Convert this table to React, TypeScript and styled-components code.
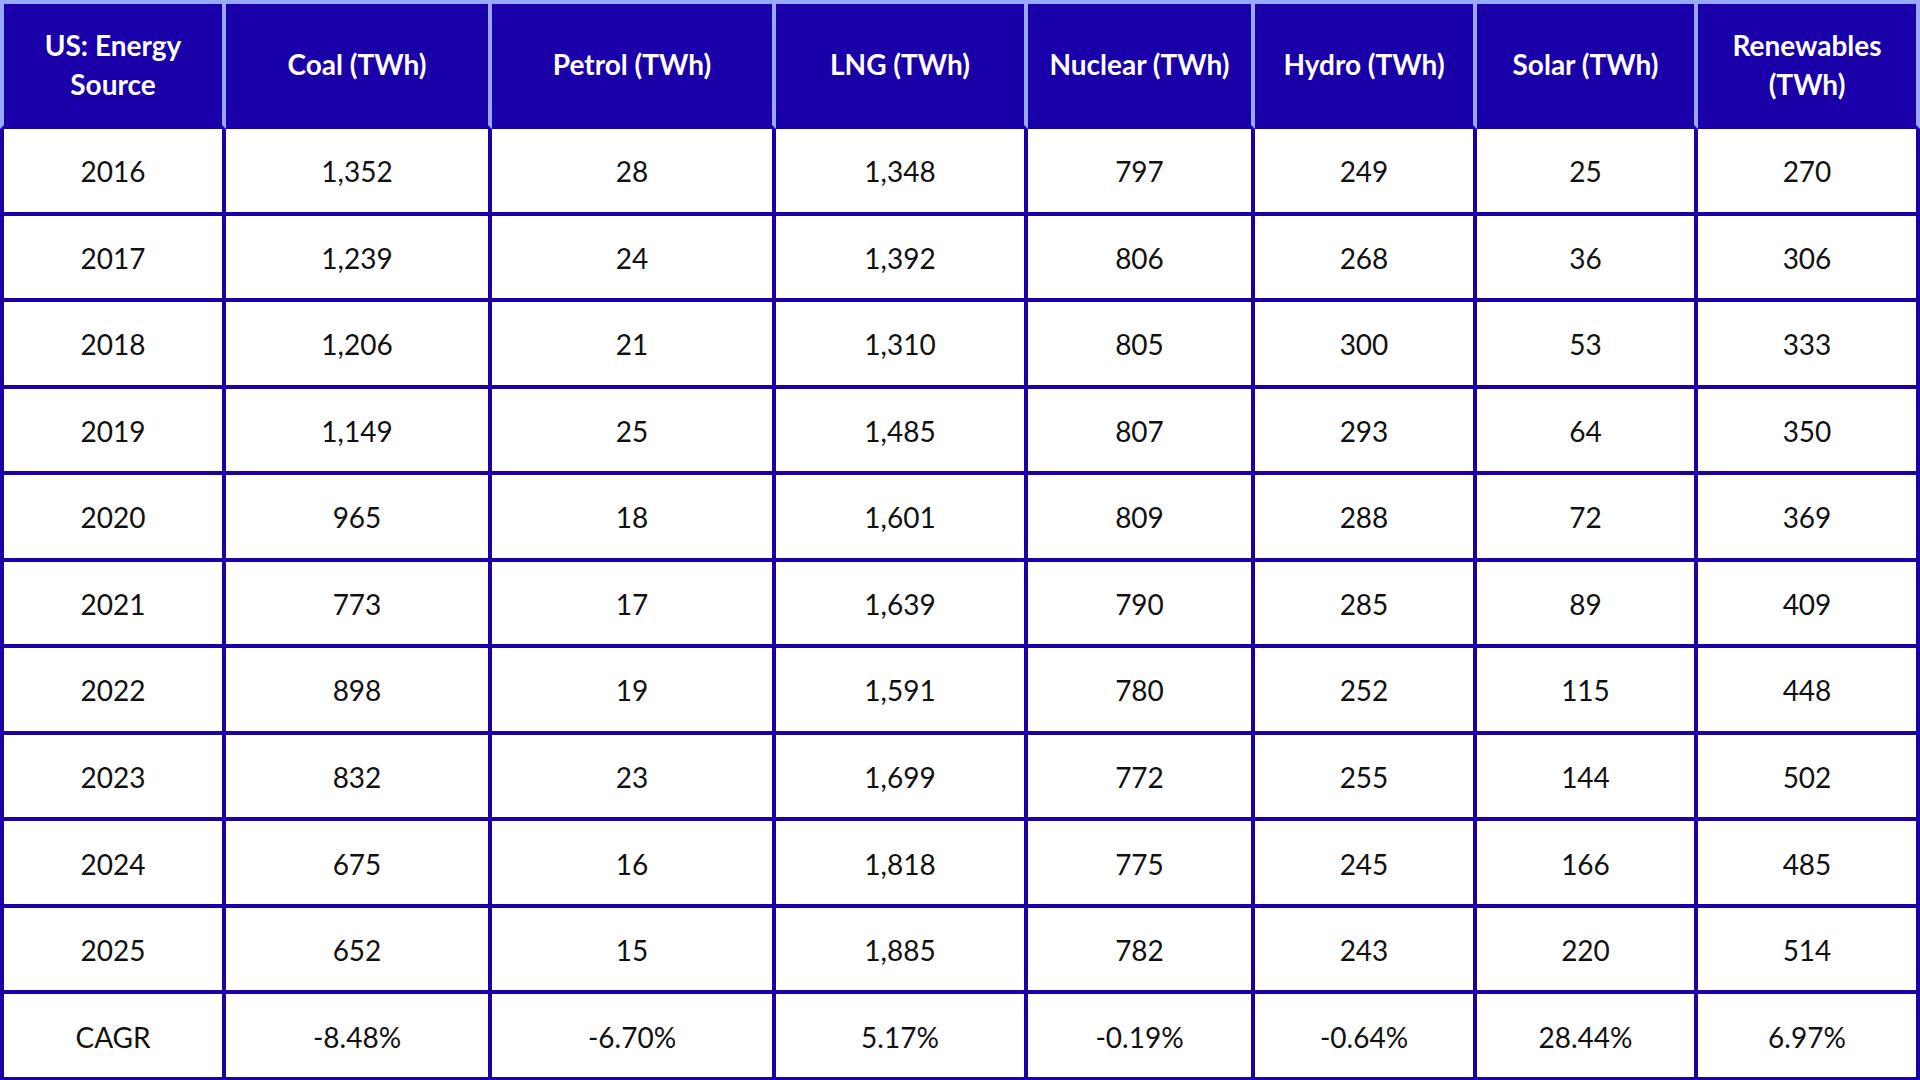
import styled, { createGlobalStyle } from 'styled-components';

const GlobalStyle = createGlobalStyle`
    html, body {
        margin: 0;
        padding: 0;
        background: #ffffff;
    }
    body {
        font-family: Lato, 'Open Sans', sans-serif;
    }
`;

const DARK = '#1900a9';
const LIGHT = '#98a8ff';

const COLUMN_WIDTHS = [226, 266, 284, 252, 227, 222, 221, 222];

const Sheet = styled.div`
    width: 1920px;
    height: 1080px;
    overflow: hidden;
`;

const Table = styled.table`
    width: 1920px;
    height: 1081px;
    table-layout: fixed;
    border-collapse: separate;
    border-spacing: 0;
`;

const HeadCell = styled.th`
    box-sizing: border-box;
    height: 129px;
    padding: 0 10px;
    background: ${DARK};
    color: #ffffff;
    font-size: 28px;
    font-weight: 700;
    line-height: 39px;
    text-align: center;
    vertical-align: middle;
    border-top: 4px solid ${LIGHT};
    border-right: 4px solid ${LIGHT};
    border-bottom: 4px solid ${DARK};

    &:first-child {
        border-left: 4px solid ${LIGHT};
    }
`;

const Cell = styled.td`
    box-sizing: border-box;
    padding: 2px 0 0;
    color: #111111;
    font-size: 28px;
    font-weight: 400;
    text-align: center;
    vertical-align: middle;
    border-right: 4px solid ${DARK};
    border-bottom: 4px solid ${DARK};

    &:first-child {
        border-left: 4px solid ${DARK};
    }
`;

const Row = styled.tr`
    height: 86.5px;
`;

const HEADERS = [
    ['US: Energy', 'Source'],
    ['Coal (TWh)'],
    ['Petrol (TWh)'],
    ['LNG (TWh)'],
    ['Nuclear (TWh)'],
    ['Hydro (TWh)'],
    ['Solar (TWh)'],
    ['Renewables', '(TWh)']
];

const ROWS = [
    ['2016', '1,352', '28', '1,348', '797', '249', '25', '270'],
    ['2017', '1,239', '24', '1,392', '806', '268', '36', '306'],
    ['2018', '1,206', '21', '1,310', '805', '300', '53', '333'],
    ['2019', '1,149', '25', '1,485', '807', '293', '64', '350'],
    ['2020', '965', '18', '1,601', '809', '288', '72', '369'],
    ['2021', '773', '17', '1,639', '790', '285', '89', '409'],
    ['2022', '898', '19', '1,591', '780', '252', '115', '448'],
    ['2023', '832', '23', '1,699', '772', '255', '144', '502'],
    ['2024', '675', '16', '1,818', '775', '245', '166', '485'],
    ['2025', '652', '15', '1,885', '782', '243', '220', '514'],
    ['CAGR', '-8.48%', '-6.70%', '5.17%', '-0.19%', '-0.64%', '28.44%', '6.97%']
];

function App() {
    return (
        <Sheet>
            <GlobalStyle />
            <Table>
                <colgroup>
                    {COLUMN_WIDTHS.map((width, index) => (
                        <col key={index} style={{ width }} />
                    ))}
                </colgroup>
                <thead>
                    <tr>
                        {HEADERS.map((lines, index) => (
                            <HeadCell key={index}>
                                {lines.map((line, i) => (
                                    <div key={i}>{line}</div>
                                ))}
                            </HeadCell>
                        ))}
                    </tr>
                </thead>
                <tbody>
                    {ROWS.map((row, index) => (
                        <Row key={index}>
                            {row.map((value, i) => (
                                <Cell key={i}>{value}</Cell>
                            ))}
                        </Row>
                    ))}
                </tbody>
            </Table>
        </Sheet>
    );
}

export default App;
